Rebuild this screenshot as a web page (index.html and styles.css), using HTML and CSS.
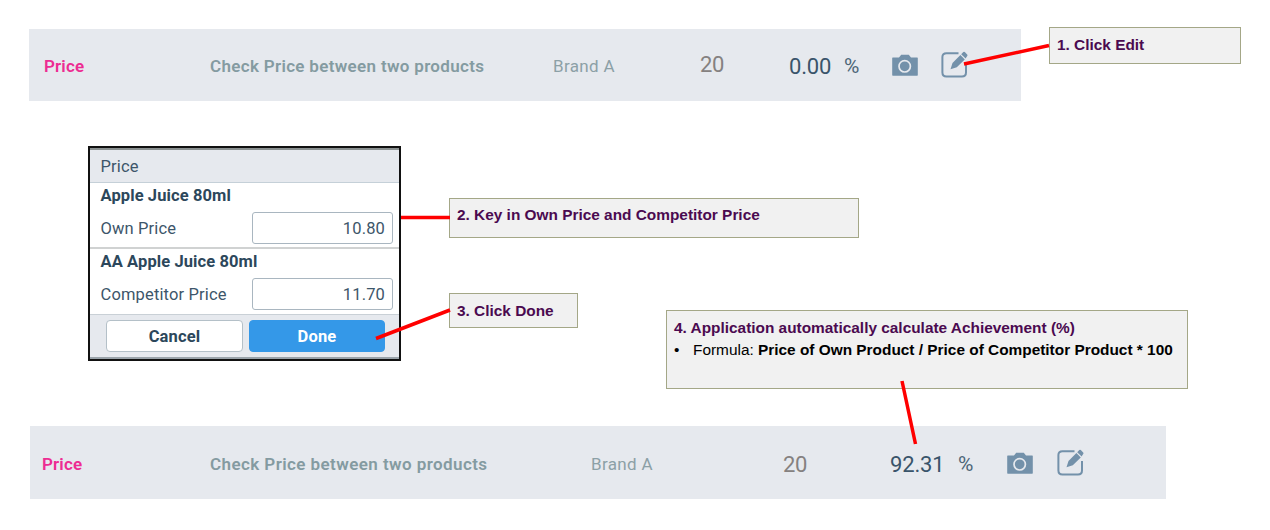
FILE: index.html
```html
<!DOCTYPE html>
<html lang="en">
<head>
<meta charset="utf-8">
<title>Price check guide</title>
<link rel="stylesheet" href="styles.css">
</head>
<body>
<svg class="defs" width="0" height="0" aria-hidden="true">
  <symbol id="camera" viewBox="0 0 26 22">
    <path fill="#7391aa" d="M.8 3.500H7L9.200.8h7.600L19 3.500h6.200q.6 0 .6.600v17q0 .6-.6.600H.8q-.6 0-.6-.6v-17q0-.6.600-.6z"/>
    <circle cx="12.700" cy="12.300" r="5.700" fill="none" stroke="#e6e9ee" stroke-width="1.700"/>
  </symbol>
  <symbol id="edit" viewBox="0 0 27 27">
    <path fill="none" stroke="#7391aa" stroke-width="2" d="M17.500 2.200H5.500Q1.400 2.200 1.400 6v15.500q0 4 4 4H21q4 0 4-4V12"/>
    <path fill="#7391aa" d="M9.500 18.200l2-6.200L19.400 4.100l4.400 4.400L15.800 16.300zM20.200 3.200L22.300 1.100q.7-.7 1.500 0l2.400 2.400q.7.800 0 1.500L24.600 7.500z"/>
  </symbol>
</svg>
<main class="guide">
  <section class="step-edit">
    <div class="bar bar-before">
      <span class="kpi">Price</span>
      <span class="desc">Check Price between two products</span>
      <span class="brand">Brand A</span>
      <span class="weight">20</span>
      <span class="value">0.00</span>
      <span class="percent">%</span>
      <svg class="camera"><use href="#camera"/></svg>
      <svg class="edit"><use href="#edit"/></svg>
    </div>
    <div class="note note-edit">1. Click Edit</div>
  </section>
  <section class="step-input">
    <div class="dialog">
      <header class="dialog-title">Price</header>
      <div class="product">
        <h2>Apple Juice 80ml</h2>
        <div class="field"><span>Own Price</span><span class="input">10.80</span></div>
      </div>
      <div class="product product-rival">
        <h2>AA Apple Juice 80ml</h2>
        <div class="field"><span>Competitor Price</span><span class="input">11.70</span></div>
      </div>
      <footer class="actions"><span class="button">Cancel</span><span class="button primary">Done</span></footer>
    </div>
    <div class="notes">
      <div class="note note-key">2. Key in Own Price and Competitor Price</div>
      <div class="notes-row">
        <div class="note note-done">3. Click Done</div>
        <div class="note note-calc">
          <p>4. Application automatically calculate Achievement (%)</p>
          <p class="formula"><span class="bullet">•</span><span>Formula: <b>Price of Own Product / Price of Competitor Product * 100</b></span></p>
        </div>
      </div>
    </div>
  </section>
  <div class="bar bar-after">
    <span class="kpi">Price</span>
    <span class="desc">Check Price between two products</span>
    <span class="brand">Brand A</span>
    <span class="weight">20</span>
    <span class="value">92.31</span>
    <span class="percent">%</span>
    <svg class="camera"><use href="#camera"/></svg>
    <svg class="edit"><use href="#edit"/></svg>
  </div>
  <svg class="pointers" viewBox="0 0 1270 530" aria-hidden="true">
    <path d="M964 64L1049 45.500M401 217.500H450M376 338.500L450 310M902 381L915.500 444"/>
  </svg>
</main>
</body>
</html>
```
FILE: styles.css
```css
* { box-sizing: border-box; }
body { margin: 0; background: #fff; }
h2, p { margin: 0; }
.defs { display: block; }
.guide { position: relative; width: 1270px; height: 530px; overflow: hidden; font-family: Roboto, "Liberation Sans", sans-serif; }
.step-edit { display: flex; align-items: flex-start; height: 146px; padding: 27px 0 0 29px; }
.bar { display: grid; align-items: center; background: #e6e9ee; white-space: nowrap; color: #34495e; }
.bar-before { width: 992px; height: 72px; margin-top: 2px; padding-left: 15px; grid-template-columns: 166px 343px 147px 89px 55px 48px 49px 30px; }
.bar-after { width: 1136px; height: 73px; margin: 65px 0 0 30px; padding-left: 12px; grid-template-columns: 168px 381px 192px 107px 68px 49px 50px 30px; }
.kpi { color: #ed2c92; font-size: 17px; font-weight: 600; letter-spacing: .15px; padding-top: 2px; }
.desc { color: #849ba1; font-size: 17px; font-weight: 600; letter-spacing: .32px; padding-top: 2px; }
.bar-after .desc { letter-spacing: .42px; }
.brand { color: #8ca0a6; font-size: 17px; padding-top: 2px; letter-spacing: .35px; }
.bar-after .kpi, .bar-after .desc, .bar-after .brand { padding-top: 3px; }
.weight { color: #858180; font-size: 22px; letter-spacing: -.4px; padding-bottom: 1px; }
.bar-after .weight { padding: 3px 0 0; }
.value { color: #39546a; font-size: 22px; letter-spacing: -.15px; padding-top: 2px; }
.bar-after .value { padding-top: 3px; }
.percent { color: #4d6678; font-size: 21px; padding-top: 2px; }
.camera { width: 26px; height: 22px; }
.edit { width: 27px; height: 27px; }
.bar-before .edit { margin-bottom: 2px; }
.note { background: #f1f1f1; border: 1px solid #a4a787; color: #4b0a50; font: bold 15.400px/17px "Liberation Sans", Arial, sans-serif; padding: 8px 7px; white-space: nowrap; }
.note-edit { width: 192px; height: 37px; margin-left: 28px; }
.step-input { display: flex; padding-left: 88px; height: 215px; align-items: flex-start; }
.dialog { width: 313px; height: 215px; border: 2px solid #111; background: #fff; color: #3d566a; font-size: 16.500px; letter-spacing: .15px; display: flex; flex-direction: column; }
.dialog-title { height: 35px; border-top: 2px solid #8a9090; border-bottom: 1px solid #c5d0d8; background: #e6e9ee; padding: 0 10.500px; line-height: 34px; }
.product { height: 66px; border-bottom: 2px solid #d0d2d2; padding: 0 6px 0 10.500px; }
.product-rival { border-bottom: 1px solid #c9d0d6; }
.product h2 { height: 29px; font-size: 16.500px; line-height: 25px; font-weight: 700; color: #2c475b; letter-spacing: .1px; }
.field { display: flex; justify-content: space-between; align-items: center; height: 32px; }
.input { width: 141px; height: 32px; border: 1px solid #a9b6c0; border-radius: 3px; padding-right: 7px; text-align: right; line-height: 31px; }
.actions { flex: 1; background: #e6e9ee; border-bottom: 2px solid #9aa3aa; display: flex; gap: 6px; padding: 5px 0 0 16px; }
.button { width: 137px; height: 32px; border: 1px solid #b4c0c8; border-radius: 4px; background: #fff; color: #2c475b; font-weight: 700; line-height: 31px; text-align: center; }
.primary { background: #3498e8; border-color: #3498e8; color: #fff; width: 136px; }
.notes { padding: 52px 0 0 48px; }
.note-key { width: 410px; height: 40px; padding-top: 7px; }
.notes-row { display: flex; align-items: flex-start; margin-top: 55px; }
.note-done { width: 129px; height: 35px; }
.note-calc { width: 522px; height: 79px; margin: 17px 0 0 88px; }
.formula { display: flex; color: #000; font-weight: 400; padding-top: 5px; }
.bullet { width: 19px; }
.pointers { position: absolute; inset: 0; width: 1270px; height: 530px; pointer-events: none; }
.pointers path { fill: none; stroke: #f00; stroke-width: 3.500; }
```
